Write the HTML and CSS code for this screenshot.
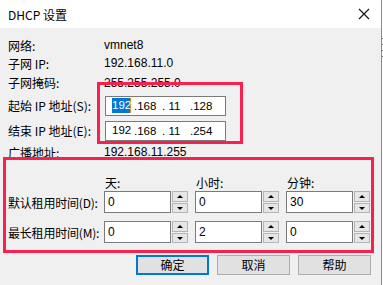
FILE: index.html
```html
<!DOCTYPE html>
<html>
	<head>
		<meta charset="UTF-8">
		<title>DHCP 设置</title>
		<link rel="stylesheet" href="styles.css">
	</head>
	<body>
		<div class="screen">
			<div class="dialog">
				<div class="titlebar">
					<span class="title">DHCP 设置</span>
					<svg class="close" width="12" height="12" viewBox="0 0 12 12"><path d="M1 1L11 11M11 1L1 11" stroke="#111" stroke-width="1.1" fill="none"/></svg>
				</div>
				<div class="body">
					<div class="info">
						<div class="row r18"><span class="lbl">网络:</span><span class="val">vmnet8</span></div>
						<div class="row r18"><span class="lbl">子网 IP:</span><span class="val">192.168.11.0</span></div>
						<div class="row r20"><span class="lbl">子网掩码:</span><span class="val">255.255.255.0</span></div>
						<div class="row r25">
							<span class="lbl">起始 IP 地址(S):</span>
							<div class="ipbox"><span class="first sel">192</span><span class="oct">.168</span><span class="oct">. 11</span><span class="oct">.128</span></div>
						</div>
						<div class="row r25">
							<span class="lbl">结束 IP 地址(E):</span>
							<div class="ipbox"><span class="first">192</span><span class="oct">.168</span><span class="oct">. 11</span><span class="oct">.254</span></div>
						</div>
						<div class="row r18"><span class="lbl">广播地址:</span><span class="val">192.168.11.255</span></div>
					</div>

					<div class="lease-head">
						<span></span><span class="head">天:</span><span class="head">小时:</span><span class="head">分钟:</span>
					</div>
					<div class="lease">
						<span class="llbl">默认租用时间(D):</span>
						<div class="spin"><div class="num">0</div><div class="arrows"><span class="up"></span><span class="down"></span></div></div>
						<div class="spin"><div class="num">0</div><div class="arrows"><span class="up"></span><span class="down"></span></div></div>
						<div class="spin"><div class="num">30</div><div class="arrows"><span class="up"></span><span class="down"></span></div></div>

						<span class="llbl">最长租用时间(M):</span>
						<div class="spin"><div class="num">0</div><div class="arrows"><span class="up"></span><span class="down"></span></div></div>
						<div class="spin"><div class="num">2</div><div class="arrows"><span class="up"></span><span class="down"></span></div></div>
						<div class="spin"><div class="num">0</div><div class="arrows"><span class="up"></span><span class="down"></span></div></div>
					</div>

					<div class="buttons">
						<button class="btn default">确定</button>
						<button class="btn">取消</button>
						<button class="btn">帮助</button>
					</div>
				</div>

				<!-- 빨간 표시 박스 -->
				<div class="mark mark-ip"></div>
				<div class="mark mark-lease"></div>
			</div>
			<div class="edge">
				<i></i><i></i><i></i><i></i>
			</div>
		</div>
	</body>
</html>
```

FILE: styles.css
```css
* { margin:0; padding:0; box-sizing:border-box; }
body { width:383px; height:285px; overflow:hidden; background:#fff; font-family:"Liberation Sans", "Noto Sans CJK SC", sans-serif; font-size:12px; color:#000; }

.screen { display:flex; height:285px; }
.dialog { position:relative; width:382px; height:285px; border-right:1px solid #8a8a8a; background:#f0f0f0; }
.edge { flex:1; padding-top:38px; display:flex; flex-direction:column; gap:5px; }
.edge i { display:block; height:1px; background:#666; }

/* title */
.titlebar { height:28px; background:#fff; display:flex; align-items:center; justify-content:space-between; padding:0 11px 0 8px; }
.title { font-family:"Noto Sans CJK SC", sans-serif; font-size:12px; }
.close { display:block; }

/* info rows */
.info { padding-top:8px; }
.row { display:flex; align-items:center; }
.r18 { height:18px; }
.r20 { height:21px; }
.r25 { height:25px; }
.lbl { width:104px; flex-shrink:0; padding-left:8px; font-family:"Noto Sans CJK SC", sans-serif; font-size:12px; white-space:nowrap; overflow:hidden; }
.val { font-size:12px; }

.ipbox { width:121px; height:20px; margin-left:1px; background:#fff; border:1px solid #7a7a7a; display:flex; align-items:center; padding-left:6px; font-size:11.5px; }
.ipbox .first { width:19px; line-height:15px; text-align:center; white-space:nowrap; }
.ipbox .sel { background:#0078d7; color:#fff; border-right:1px solid #e8871e; }
.ipbox .oct { width:28px; padding-left:3px; white-space:pre; }

/* lease grid */
.lease-head, .lease { display:grid; grid-template-columns:97px 84px 84px 84px; column-gap:7px; }
.lease-head { height:17px; margin-top:13px; align-items:center; }
.lease { grid-template-rows:22px 22px; row-gap:8px; }
.head { font-family:"Noto Sans CJK SC", sans-serif; font-size:12px; padding-left:1px; }
.llbl { padding-left:8px; font-family:"Noto Sans CJK SC", sans-serif; font-size:12px; white-space:nowrap; align-self:center; letter-spacing:-0.2px; }
.spin { display:flex; gap:1px; }
.num { width:67px; height:22px; background:#fff; border:1px solid #7a7a7a; padding-left:3px; line-height:20px; font-size:12px; }
.arrows { width:16px; display:flex; flex-direction:column; gap:1px; }
.arrows span { flex:1; background:#e6e6e6; border:1px solid #b5b5b5; position:relative; }
.arrows span::after { content:""; position:absolute; left:4px; top:3px; border-left:3.5px solid transparent; border-right:3.5px solid transparent; }
.arrows .up::after { border-bottom:3.5px solid #000; }
.arrows .down::after { border-top:3.5px solid #000; }

/* buttons */
.buttons { display:flex; gap:8px; padding-left:136px; margin-top:12px; }
.btn { width:73px; height:20px; background:#e1e1e1; border:1px solid #adadad; font-family:"Noto Sans CJK SC", sans-serif; font-size:12px; color:#000; line-height:16px; }
.btn.default { border:2px solid #0078d7; }

/* red marks */
.mark { position:absolute; border:3px solid #f9204f; }
.mark-ip { left:97px; top:82px; width:146px; height:62px; }
.mark-lease { left:3px; top:157px; width:371px; height:96px; }
```
